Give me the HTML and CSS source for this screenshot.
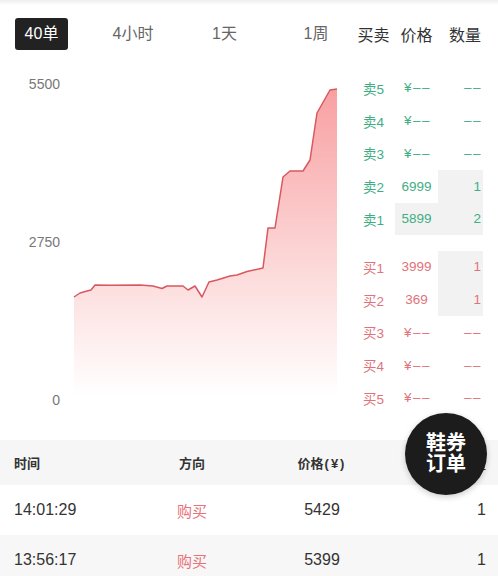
FILE: index.html
```html
<!DOCTYPE html>
<html lang="zh">
<head>
<meta charset="utf-8">
<title>行情</title>
<link rel="stylesheet" href="styles.css">
</head>
<body>
<div class="page">
  <div class="top">
    <div class="left">
      <div class="tabs">
        <div class="tab active">40单</div>
        <div class="tab">4小时</div>
        <div class="tab">1天</div>
        <div class="tab">1周</div>
      </div>
      <svg class="chart" width="352" height="390" viewBox="0 50 352 390" xmlns="http://www.w3.org/2000/svg">
        <defs>
          <linearGradient id="fillg" x1="0" y1="89" x2="0" y2="396" gradientUnits="userSpaceOnUse">
            <stop offset="0" stop-color="#f8a0a2"/>
            <stop offset="0.55" stop-color="#fcd6d6"/>
            <stop offset="1" stop-color="#ffffff"/>
          </linearGradient>
        </defs>
        <text class="ylab" x="60" y="89" text-anchor="end">5500</text>
        <text class="ylab" x="60" y="247" text-anchor="end">2750</text>
        <text class="ylab" x="60" y="405" text-anchor="end">0</text>
        <polygon fill="url(#fillg)" points="74,297 80,293 87,291 91,290 95,285 110,285.3 140,285 153,286 162,288.5 167,286 183,286 188,290 195,286 202,297 209,282 217,280 230,276 237,275 247,271.5 263,268 268,228 275,228 283,177 290,171 303,171 310,160 317,113 330,90 337,89 337,396 74,396"/>
        <polyline fill="none" stroke="#d9575f" stroke-width="1.5" stroke-linejoin="round" points="74,297 80,293 87,291 91,290 95,285 110,285.3 140,285 153,286 162,288.5 167,286 183,286 188,290 195,286 202,297 209,282 217,280 230,276 237,275 247,271.5 263,268 268,228 275,228 283,177 290,171 303,171 310,160 317,113 330,90 337,89"/>
      </svg>
    </div>
    <div class="book">
      <div class="book-row book-head">
        <span class="c-lab">买卖</span>
        <span class="c-price">价格</span>
        <span class="c-qty">数量</span>
      </div>
      <div class="book-group sell">
        <div class="book-row"><span class="c-lab">卖5</span><span class="c-price dash">¥––</span><span class="c-qty dash">––</span></div>
        <div class="book-row"><span class="c-lab">卖4</span><span class="c-price dash">¥––</span><span class="c-qty dash">––</span></div>
        <div class="book-row"><span class="c-lab">卖3</span><span class="c-price dash">¥––</span><span class="c-qty dash">––</span></div>
        <div class="book-row"><span class="c-lab">卖2</span><span class="c-price">6999</span><span class="c-qty shade">1</span></div>
        <div class="book-row"><span class="c-lab">卖1</span><span class="c-price shade">5899</span><span class="c-qty shade">2</span></div>
      </div>
      <div class="book-group buy">
        <div class="book-row"><span class="c-lab">买1</span><span class="c-price">3999</span><span class="c-qty shade">1</span></div>
        <div class="book-row"><span class="c-lab">买2</span><span class="c-price">369</span><span class="c-qty shade">1</span></div>
        <div class="book-row"><span class="c-lab">买3</span><span class="c-price dash">¥––</span><span class="c-qty dash">––</span></div>
        <div class="book-row"><span class="c-lab">买4</span><span class="c-price dash">¥––</span><span class="c-qty dash">––</span></div>
        <div class="book-row"><span class="c-lab">买5</span><span class="c-price dash">¥––</span><span class="c-qty dash">––</span></div>
      </div>
    </div>
  </div>
  <div class="trades">
    <div class="trow thead">
      <span class="t-time">时间</span>
      <span class="t-dir">方向</span>
      <span class="t-price">价格<span class="paren">(¥)</span></span>
      <span class="t-qty">数量</span>
    </div>
    <div class="trow">
      <span class="t-time">14:01:29</span>
      <span class="t-dir buy-text">购买</span>
      <span class="t-price">5429</span>
      <span class="t-qty">1</span>
    </div>
    <div class="trow alt">
      <span class="t-time">13:56:17</span>
      <span class="t-dir buy-text">购买</span>
      <span class="t-price">5399</span>
      <span class="t-qty">1</span>
    </div>
  </div>
  <div class="fab">鞋券<br>订单</div>
</div>
</body>
</html>
```

FILE: styles.css
```css
* { box-sizing: border-box; }
html, body {
  margin: 0;
  padding: 0;
  background: #fff;
}
body {
  font-family: "Liberation Sans", "Noto Sans CJK SC", sans-serif;
  color: #333;
  width: 498px;
  height: 576px;
  overflow: hidden;
}
.page {
  position: relative;
  width: 498px;
  height: 576px;
  background: linear-gradient(#eeeeee, #ffffff 5px);
}
.top {
  display: flex;
  height: 440px;
}
.left {
  width: 352px;
  display: flex;
  flex-direction: column;
}
.tabs {
  display: flex;
  gap: 38.5px;
  padding: 18px 0 0 15px;
  height: 50px;
}
.tab {
  width: 53px;
  height: 32px;
  line-height: 32px;
  text-align: center;
  font-size: 16px;
  color: #666;
  border-radius: 3px;
}
.tab.active {
  background: #222;
  color: #fff;
}
.chart {
  display: block;
}
.ylab {
  font-family: "Liberation Sans", sans-serif;
  font-size: 14px;
  fill: #777;
}
.book {
  width: 146px;
  padding-top: 18px;
}
.book-row {
  display: grid;
  grid-template-columns: 43px 43px 45px;
  height: 32.75px;
  font-size: 13.5px;
}
.book-row > span {
  display: flex;
  align-items: center;
}
.c-lab { justify-content: center; }
.c-price { justify-content: center; }
.c-qty { justify-content: flex-end; padding-right: 2px; }
.dash { letter-spacing: 1.5px; }
.c-price.dash { padding-left: 2px; }
.c-qty.dash { padding-right: 1px; }
.book-head {
  height: 32px;
  font-size: 16px;
  color: #333;
  margin-bottom: 21.6px;
}
.book-group.sell { color: #3fae84; }
.book-group.buy { color: #e2727a; margin-top: 15.25px; }
.shade { background: #f2f2f2; }
.trades {
  display: flex;
  flex-direction: column;
}
.trow {
  display: grid;
  grid-template-columns: 148px 60px 200px 1fr;
  padding: 0 12px 0 14px;
  height: 50px;
  align-items: center;
  font-size: 16px;
  color: #333;
}
.thead {
  height: 45px;
  background: #f6f6f6;
  font-size: 13px;
  font-weight: bold;
}
.paren { letter-spacing: 2px; margin-left: 1px; }
.trow.alt { background: #f7f7f7; }
.t-dir { text-align: center; }
.t-price { text-align: center; }
.t-qty { text-align: right; }
.buy-text { color: #e8727a; font-size: 15px; }
.fab {
  position: absolute;
  left: 405px;
  top: 413px;
  width: 82px;
  height: 82px;
  border-radius: 50%;
  background: #1c1c1c;
  color: #fff;
  font-size: 20px;
  font-weight: bold;
  line-height: 21px;
  display: flex;
  align-items: center;
  justify-content: center;
  text-align: center;
  box-shadow: 0 2px 6px rgba(0, 0, 0, 0.2);
}
```
